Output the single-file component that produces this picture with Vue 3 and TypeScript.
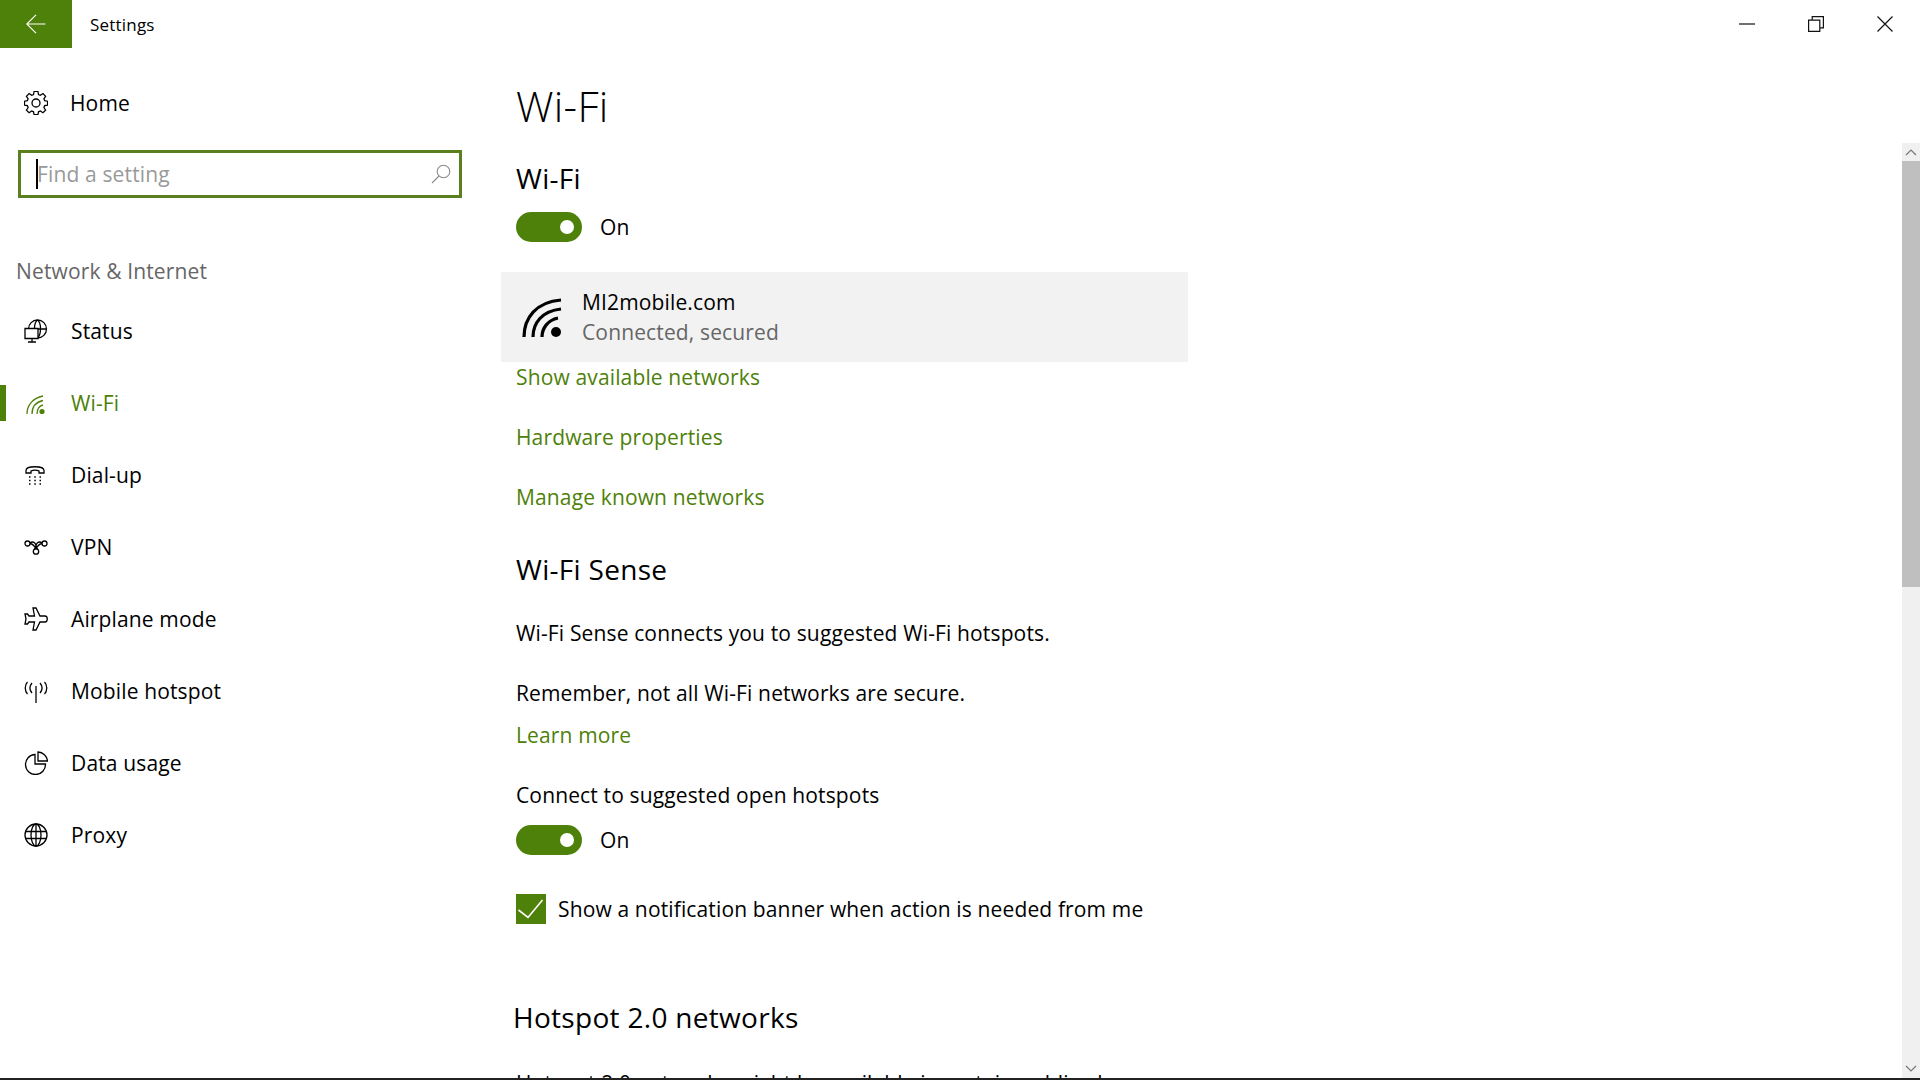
<template>
  <div class="window">
    <div class="titlebar">
      <button class="back">
        <svg width="20" height="20" viewBox="0 0 20 20" fill="none" stroke="#fff" stroke-width="1.2">
          <path d="M0.8 10H19.5M10 0.8L0.8 10L10 19.2" />
        </svg>
      </button>
      <span class="app-title">Settings</span>
      <div class="caption">
        <svg viewBox="0 0 16 16" fill="none" stroke="#111" stroke-width="1.2">
          <path d="M0 8H16" />
        </svg>
        <svg viewBox="0 0 16 16" fill="none" stroke="#111" stroke-width="1.2">
          <path d="M0.6 4.2H11.8V15.4H0.6ZM4.2 4.2V0.6H15.4V11.8H11.8" />
        </svg>
        <svg viewBox="0 0 16 16" fill="none" stroke="#111" stroke-width="1.2">
          <path d="M0.5 0.5L15.5 15.5M15.5 0.5L0.5 15.5" />
        </svg>
      </div>
    </div>

    <div class="body">
      <aside class="sidebar">
        <div class="home">
          <svg class="nav-icon" viewBox="0 0 24 24" fill="none" stroke="currentColor" stroke-width="1.3">
            <circle cx="12" cy="12" r="4" />
            <path d="M10 1h4l.6 3.2 1.9.8 2.7-1.8 2.8 2.8-1.8 2.7.8 1.9 3 .6v4l-3 .6-.8 1.9 1.8 2.7-2.8 2.8-2.7-1.8-1.9.8-.6 3h-4l-.6-3-1.9-.8-2.7 1.8-2.8-2.8 1.8-2.7-.8-1.9-3-.6v-4l3-.6.8-1.9L2 6l2.8-2.8L7.5 5l1.9-.8z" transform="translate(.5 -.5) scale(.96)" />
          </svg>
          <span>Home</span>
        </div>

        <div class="search">
          <span class="caret"></span>
          <span class="placeholder">Find a setting</span>
          <svg width="20" height="20" viewBox="0 0 20 20" fill="none" stroke="#8a8a8a" stroke-width="1.1">
            <circle cx="12.5" cy="7.5" r="6.3" />
            <path d="M8 12L1 19" />
          </svg>
        </div>

        <div class="group-title">Network &amp; Internet</div>

        <nav class="nav">
          <div v-for="item in navItems" :key="item.label" class="nav-row" :class="{ active: item.active }">
            <svg class="nav-icon" viewBox="0 0 24 24" fill="none" stroke="currentColor" stroke-width="1.3" v-html="item.icon"></svg>
            <span>{{ item.label }}</span>
          </div>
        </nav>
      </aside>

      <main class="content">
        <h1>Wi-Fi</h1>
        <h2 class="first">Wi-Fi</h2>
        <div class="toggle-row">
          <span class="toggle"><i></i></span>
          <span>On</span>
        </div>

        <div class="network">
          <svg class="network-icon" width="42" height="40" viewBox="0 0 42 40" fill="none" stroke="#000" stroke-width="3.2">
            <path d="M2 39C2 20 14 4 39 2" />
            <path d="M11 39C11 25 20 13 39 11" />
            <path d="M20 39C20 30 26 22 36 20" />
            <circle cx="34" cy="34" r="5" fill="#000" stroke="none" />
          </svg>
          <div class="network-text">
            <div>MI2mobile.com</div>
            <div class="muted">Connected, secured</div>
          </div>
        </div>

        <a class="link link-available">Show available networks</a>
        <a class="link link-hardware">Hardware properties</a>
        <a class="link link-manage">Manage known networks</a>

        <h2 class="sense">Wi-Fi Sense</h2>
        <p class="para-one">Wi-Fi Sense connects you to suggested Wi-Fi hotspots.</p>
        <p class="para-two">Remember, not all Wi-Fi networks are secure.</p>
        <a class="link link-learn">Learn more</a>
        <p class="para-three">Connect to suggested open hotspots</p>
        <div class="toggle-row second">
          <span class="toggle"><i></i></span>
          <span>On</span>
        </div>

        <label class="check-row">
          <span class="check">
            <svg width="30" height="30" viewBox="0 0 30 30" fill="none" stroke="#fff" stroke-width="1.6">
              <path d="M2.500 16L12 23.500L26.500 6" />
            </svg>
          </span>
          <span>Show a notification banner when action is needed from me</span>
        </label>

        <h2 class="hotspot">Hotspot 2.0 networks</h2>
        <p class="para-cut">Hotspot 2.0 networks might be available in certain public places</p>
      </main>

      <div class="scrollbar">
        <div class="arrow">
          <svg width="12" height="8" viewBox="0 0 12 8" fill="none" stroke="#777" stroke-width="1.2">
            <path d="M1 7L6 2L11 7" />
          </svg>
        </div>
        <div class="thumb"></div>
        <div class="track"></div>
        <div class="arrow">
          <svg width="12" height="8" viewBox="0 0 12 8" fill="none" stroke="#777" stroke-width="1.2">
            <path d="M1 1L6 6L11 1" />
          </svg>
        </div>
      </div>
    </div>
    <div class="taskbar-edge"></div>
  </div>
</template>

<script setup lang="ts">
interface NavItem {
  label: string
  icon: string
  active?: boolean
}

const navItems: NavItem[] = [
  {
    label: 'Status',
    icon: '<circle cx="13.500" cy="10" r="9" /><path d="M4.500 10H22.500M13.500 1C9.500 4 9.500 15 13.500 19M13.500 1C17.500 4 17.500 15 13.500 19" /><path d="M1 9.500H14V19.500H1ZM8 19.500V22.500M4 23H12" fill="#fff" />',
  },
  {
    label: 'Wi-Fi',
    icon: '<path d="M3 23C3 14 9 7 19 5M8 23C8 16 12 11 19 9.500M13 23C13 19 15 15 19 14" /><circle cx="18" cy="20.500" r="2.600" fill="currentColor" stroke="none" />',
    active: true,
  },
  {
    label: 'Dial-up',
    icon: '<path d="M2 10V7.500C2 2.500 20 2.500 20 7.500V10H15V8C13 7 9 7 7 8V10Z" /><path d="M5 14h1.500M10.300 14h1.500M15.500 14H17M5 17.500h1.500M10.300 17.500h1.500M15.500 17.500H17M5 21h1.500M10.300 21h1.500M15.500 21H17" />',
  },
  {
    label: 'VPN',
    icon: '<circle cx="3.500" cy="8.500" r="2.500" /><circle cx="20.500" cy="8.500" r="2.500" /><circle cx="12" cy="16.500" r="2.700" /><path d="M6 8.500C9 9 11 12 12 14M18 8.500C15 9 13 12 12 14M6 8C10 5 14 10 10.500 14M18 8C14 5 10 10 13.500 14" />',
  },
  {
    label: 'Airplane mode',
    icon: '<path d="M9 1H12L16 9H21C24 9 24 15 21 15H16L12 23H9L10.500 15H5L3.500 17H1L2 12L1 7H3.500L5 9H10.500Z" />',
  },
  {
    label: 'Mobile hotspot',
    icon: '<path d="M12 7V24" /><path d="M8 4C5.500 7 5.500 11 8 14M3.500 3C0.500 6 0.500 12 3.500 15M16 4C18.500 7 18.500 11 16 14M20.500 3C23.500 6 23.500 12 20.500 15" />',
  },
  {
    label: 'Data usage',
    icon: '<path d="M11 3.500A10 10 0 1 0 21.500 13H11Z" /><path d="M14 1A10 10 0 0 1 23.500 10H14Z" />',
  },
  {
    label: 'Proxy',
    icon: '<circle cx="12" cy="12" r="11" /><ellipse cx="12" cy="12" rx="5" ry="11" /><path d="M1.500 8.500H22.500M1.500 15.500H22.500M12 1V23" />',
  },
]
</script>

<style>
html,
body {
  margin: 0;
  background: #fff;
}
</style>

<style scoped>
.window {
  width: 1920px;
  height: 1080px;
  display: flex;
  flex-direction: column;
  overflow: hidden;
  background: #fff;
  color: #000;
  font-family: "Open Sans", "Noto Sans", sans-serif;
  font-size: 21px;
  letter-spacing: 0.14px;
}

.titlebar {
  height: 48px;
  flex: none;
  display: flex;
  align-items: center;
}

.back {
  width: 72px;
  height: 48px;
  border: none;
  padding: 0;
  background: #4e8109;
  display: flex;
  align-items: center;
  justify-content: center;
}

.app-title {
  margin-left: 18px;
  font-size: 17px;
  letter-spacing: 0.2px;
}

.caption {
  margin-left: auto;
  margin-right: 27px;
  display: flex;
  gap: 53px;
}

.caption svg {
  width: 16px;
  height: 16px;
}

.body {
  flex: 1;
  min-height: 0;
  display: flex;
}

.sidebar {
  width: 501px;
  flex: none;
  box-sizing: border-box;
}

.home {
  height: 48px;
  margin-top: 31px;
  padding-left: 24px;
  display: flex;
  align-items: center;
  gap: 22px;
}

.nav-icon {
  width: 24px;
  height: 24px;
  flex: none;
}

.search {
  width: 444px;
  height: 48px;
  box-sizing: border-box;
  margin: 23px 0 0 18px;
  border: 3px solid #5a7f1f;
  display: flex;
  align-items: center;
  padding: 0 8px 0 15px;
  position: relative;
}

.caret {
  width: 2px;
  height: 30px;
  background: #000;
  flex: none;
  margin-right: -1px;
}

.placeholder {
  flex: 1;
  color: #999;
}

.group-title {
  margin: 59px 0 0 16px;
  color: #666;
}

.nav {
  margin-top: 10px;
  display: flex;
  flex-direction: column;
}

.nav-row {
  height: 72px;
  padding-left: 24px;
  display: flex;
  align-items: center;
  gap: 23px;
  position: relative;
}

.nav-row.active {
  color: #4e8109;
}

.nav-row.active::before {
  content: "";
  position: absolute;
  left: 0;
  top: 18px;
  width: 6px;
  height: 36px;
  background: #4e8109;
}

.content {
  flex: 1;
  min-width: 0;
  overflow: hidden;
  padding: 34px 0 0 15px;
}

h1 {
  margin: 0;
  font-size: 42px;
  line-height: 48px;
  font-weight: 300;
  letter-spacing: 0.3px;
}

h2 {
  margin: 0;
  font-size: 28px;
  line-height: 36px;
  font-weight: 400;
  letter-spacing: 0.3px;
}

h2.first {
  margin-top: 30px;
}

.toggle-row {
  margin-top: 16px;
  height: 30px;
  display: flex;
  align-items: center;
  gap: 18px;
}

.toggle {
  width: 66px;
  height: 30px;
  border-radius: 15px;
  background: #4e8109;
  display: flex;
  align-items: center;
  justify-content: flex-end;
  padding-right: 8px;
  box-sizing: border-box;
}

.toggle i {
  width: 14px;
  height: 14px;
  border-radius: 50%;
  background: #fff;
}

.network {
  width: 687px;
  height: 90px;
  margin: 30px 0 0 -15px;
  background: #f2f2f2;
  box-sizing: border-box;
  padding-left: 21px;
  display: flex;
  align-items: center;
  gap: 18px;
}

.network-icon {
  margin-top: 2px;
}

.network-text {
  line-height: 30px;
}

.muted {
  color: #666;
}

.link {
  display: block;
  line-height: 30px;
  color: #4e8109;
}

.link-hardware,
.link-manage {
  margin-top: 30px;
}

.sense {
  margin-top: 39px;
}

p {
  margin: 0;
  line-height: 30px;
}

.para-one {
  margin-top: 31px;
}

.para-two {
  margin-top: 30px;
}

.link-learn {
  margin-top: 12px;
}

.para-three {
  margin-top: 30px;
}

.toggle-row.second {
  margin-top: 15px;
}

.check-row {
  margin-top: 39px;
  display: flex;
  align-items: center;
  gap: 12px;
}

.check {
  width: 30px;
  height: 30px;
  background: #4e8109;
}

.check svg {
  display: block;
}

.hotspot {
  margin: 75px 0 0 -3px;
}

.para-cut {
  margin-top: 33px;
}

.scrollbar {
  width: 18px;
  flex: none;
  margin-top: 95px;
  background: #f0f0f0;
  display: flex;
  flex-direction: column;
}

.arrow {
  height: 18px;
  flex: none;
  display: flex;
  align-items: center;
  justify-content: center;
}

.thumb {
  height: 426px;
  flex: none;
  background: #bfbfbf;
}

.track {
  flex: 1;
}

.taskbar-edge {
  height: 2px;
  flex: none;
  background: #222;
}
</style>
